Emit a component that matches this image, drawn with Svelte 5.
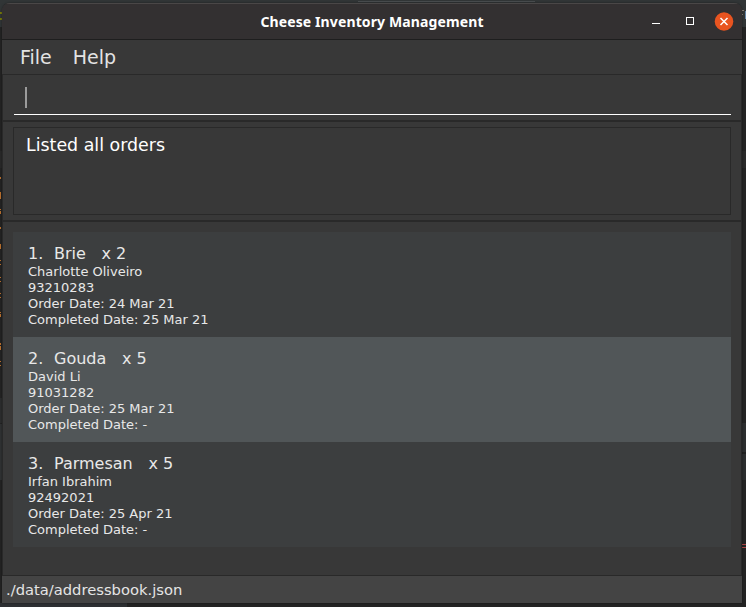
<script>
  const orders = [
    { id: 1, cheese: 'Brie', quantity: 2, customer: 'Charlotte Oliveiro', phone: '93210283', ordered: '24 Mar 21', completed: '25 Mar 21' },
    { id: 2, cheese: 'Gouda', quantity: 5, customer: 'David Li', phone: '91031282', ordered: '25 Mar 21', completed: '-' },
    { id: 3, cheese: 'Parmesan', quantity: 5, customer: 'Irfan Ibrahim', phone: '92492021', ordered: '25 Apr 21', completed: '-' }
  ];
</script>

<div class="desktop">
  <svg class="backdrop" width="746" height="607" shape-rendering="crispEdges" aria-hidden="true">
    <rect width="746" height="27" fill="#313536" />
    <rect x="358" y="1" width="177" height="1" fill="#4a4e50" />
    <path d="M0 13h2M0 19h2" stroke="#75770b" stroke-width="2" />
    <path d="M742 10.500h2M742 14.500h1" stroke="#8a8078" />
    <rect x="745" y="11" width="1" height="8" fill="#6685a5" />
    <rect y="151" width="2" height="17" fill="#292929" />
    <rect x="742" y="151" width="4" height="17" fill="#292929" />
    <path d="M.5 177v2M.5 192v7M.5 209v1M.5 211v3M.5 227v2M.5 244v5M.5 260v1M.5 264v1M.5 277v1M.5 281v1M.5 293v1M.5 297v1M.5 312v1M.5 314v3M.5 343v2M.5 346v4M.5 361v1M.5 365v1M.5 437v3" stroke="#b9702e" />
    <rect y="398" width="2" height="25" fill="#2c2d2e" />
    <rect y="424" width="2" height="56" fill="#303233" />
    <rect x="742" y="423" width="4" height="57" fill="#2c2e2f" />
    <rect x="742" y="452" width="4" height="2" fill="#202020" />
    <path d="M742 544.500h4M742 547.500h4" stroke="#a94343" />
    <rect y="603" width="127" height="4" fill="#2d2f32" />
  </svg>

  <main class="window">
    <header>
      <h1>Cheese Inventory Management</h1>
      <div class="controls">
        <svg width="10" height="12"><path d="M1 7.500h8" stroke="#fff" /></svg>
        <svg width="10" height="12"><rect x="1.500" y="1.500" width="7" height="7" fill="none" stroke="#fff" /></svg>
        <svg class="close" width="20" height="20"><circle cx="10" cy="9.500" r="9.300" fill="#e95420" /><path d="M6.500 6l7 7m0-7l-7 7" stroke="#fff" stroke-width="1.500" /></svg>
      </div>
    </header>
    <nav><span>File</span><span>Help</span></nav>
    <section class="command"><div class="input"><i></i></div></section>
    <section class="result"><div class="message">Listed all orders</div></section>
    <section class="orders">
      {#each orders as order}
        <article class:alternate={order.id % 2 === 0}>
          <h2><span class="id">{order.id}.</span><span class="cheese">{order.cheese}</span><span>x {order.quantity}</span></h2>
          <p>{order.customer}</p>
          <p>{order.phone}</p>
          <p>Order Date: {order.ordered}</p>
          <p>Completed Date: {order.completed}</p>
        </article>
      {/each}
    </section>
    <footer>./data/addressbook.json</footer>
  </main>
</div>

<style>
  :global(body) { margin: 0; overflow: hidden; background: #232323; }
  .desktop {
    position: relative;
    box-sizing: border-box;
    width: 746px;
    height: 607px;
    padding: 3px 4px 4px 2px;
    background: #232323;
    font-family: "DejaVu Sans", sans-serif;
  }
  .backdrop { position: absolute; inset: 0; }
  .window {
    position: relative;
    display: flex;
    flex-direction: column;
    height: 600px;
    border-radius: 8px 8px 0 0;
    background: #383838;
    box-shadow: 0 0 2px rgba(0, 0, 0, 0.5);
    overflow: hidden;
  }
  header {
    box-sizing: border-box;
    height: 37px;
    display: grid;
    grid-template-columns: 1fr auto 1fr;
    align-items: center;
    background: #333031;
    border-top: 1px solid #4a4747;
    border-bottom: 1px solid #1e1e1e;
  }
  h1 {
    grid-column: 2;
    margin: 0;
    font: bold 14px/20px "Noto Sans", sans-serif;
    letter-spacing: 0.12px;
    white-space: nowrap;
    color: #fff;
  }
  .controls { display: flex; justify-content: flex-end; align-items: center; gap: 24px; padding-right: 8px; }
  .controls svg { display: block; }
  .controls .close { margin-left: -5px; }
  nav {
    box-sizing: border-box;
    height: 35px;
    display: flex;
    gap: 21px;
    padding-left: 18px;
    font-size: 19px;
    line-height: 34px;
    color: #e3e3e3;
    border-bottom: 1px solid #292929;
  }
  section { box-sizing: border-box; border: 1px solid #292929; border-top: 0; }
  .command { height: 46px; padding: 0 10px 5px 11px; }
  .input { box-sizing: border-box; height: 40px; border-bottom: 1px solid #fff; padding: 12px 11px; }
  .input i { display: block; width: 2px; height: 21px; background: #9b9b9b; }
  .result { height: 100px; border-top: 1px solid #292929; padding: 5px 10px; }
  .message {
    box-sizing: border-box;
    height: 88px;
    border: 1px solid #292929;
    padding: 6px 12px;
    font-size: 17.400px;
    line-height: 22px;
    color: #fff;
  }
  .orders { height: 355px; border-top: 1px solid #292929; padding: 10px 10px 0; }
  article { box-sizing: border-box; height: 105px; padding: 12px 15px 0; background: #3c3e3f; color: #e8e8e8; }
  .alternate { background: #515658; }
  h2 { margin: 0; display: flex; font-size: 16px; line-height: 19px; height: 20px; font-weight: 400; }
  .id { width: 26px; }
  .cheese { margin-right: 15.700px; }
  p { margin: 0; font-size: 13px; line-height: 16px; }
  footer {
    box-sizing: border-box;
    height: 27px;
    padding-left: 4px;
    background: #444;
    font-size: 14.720px;
    line-height: 28px;
    color: #e5e5e5;
  }
</style>
